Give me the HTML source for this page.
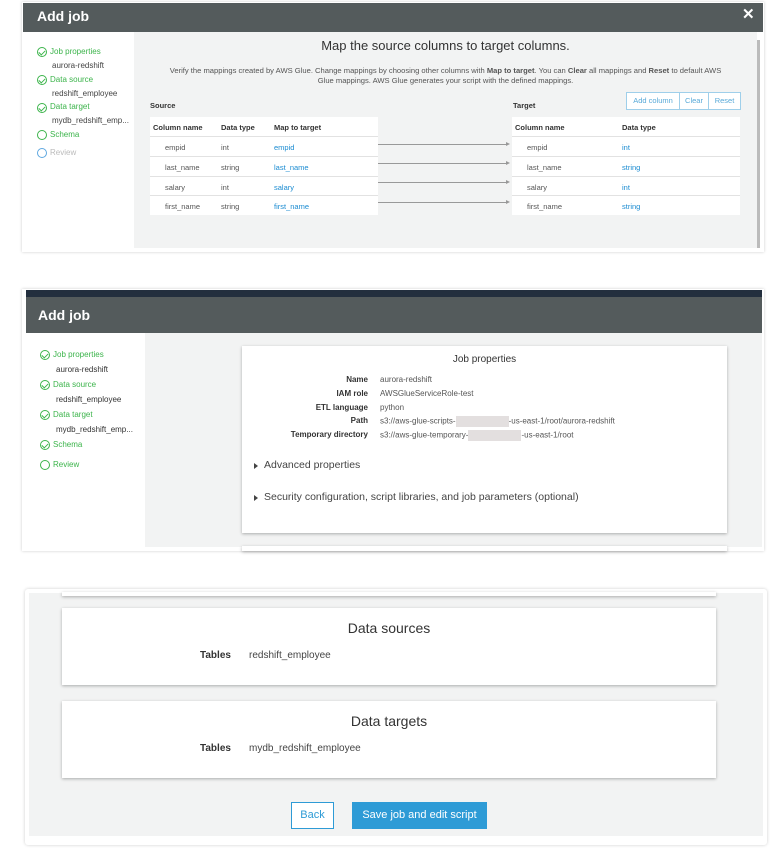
<!DOCTYPE html>
<html><head><style>
*{margin:0;padding:0;box-sizing:border-box}
body{width:775px;height:851px;background:#fff;font-family:"Liberation Sans",sans-serif;position:relative;overflow:hidden;color:#444}
.a{position:absolute;white-space:nowrap}
.hd{background:#545b5c;color:#fff;font-weight:bold}
.g{color:#3cb44b}
.b{color:#1a8bd1}
.ic{position:absolute;width:10px;height:10px;border:1.3px solid #3cb44b;border-radius:50%}
.ic:after{content:"";position:absolute;left:2px;top:1px;width:3px;height:5px;border:solid #3cb44b;border-width:0 1.3px 1.3px 0;transform:rotate(45deg)}
.ic.n:after{display:none}
.row{position:absolute;background:#fff;border-top:1px solid #e2e2e2;font-size:7.5px;color:#555}
.row span{position:absolute;top:6px}
.arr{position:absolute;height:1px;background:#999;width:130px;left:378px}
.arr:after{content:"";position:absolute;right:-2px;top:-2px;border-left:4px solid #999;border-top:2.5px solid transparent;border-bottom:2.5px solid transparent}
.btn{position:absolute;border:1px solid #9fcfea;background:#fff;color:#58a9d8;font-size:7.5px;text-align:center;line-height:16px;top:92px;height:18px}
.card{position:absolute;background:#fff;box-shadow:0 1px 3px rgba(0,0,0,.3)}
.lb{position:absolute;font-size:8px;font-weight:bold;color:#333;text-align:right;width:120px}
.vl{position:absolute;font-size:8px;color:#555}
.tri{position:absolute;border-left:4px solid #444;border-top:3px solid transparent;border-bottom:3px solid transparent}
</style></head><body>

<!-- Panel 1 -->
<div class="a" style="left:22px;top:2px;width:742px;height:250px;box-shadow:0 0 3px rgba(0,0,0,.2);background:#fff"></div>
<div class="a hd" style="left:23px;top:3px;width:740px;height:29px;font-size:14px;padding:5px 0 0 14px">Add job</div>
<div class="a" style="left:742px;top:5px;color:#fff;font-size:15px;font-weight:bold">✕</div>
<div class="a" style="left:134px;top:32px;width:623px;height:216px;background:#f2f3f3"></div>
<div class="a" style="left:757px;top:40px;width:3px;height:208px;background:#bbb"></div>

<div class="ic" style="left:37px;top:47px"></div><div class="a g" style="left:50px;top:47px;font-size:8px">Job properties</div>
<div class="a" style="left:52px;top:61px;font-size:8px">aurora-redshift</div>
<div class="ic" style="left:37px;top:75px"></div><div class="a g" style="left:50px;top:75px;font-size:8px">Data source</div>
<div class="a" style="left:52px;top:89px;font-size:8px">redshift_employee</div>
<div class="ic" style="left:37px;top:103px"></div><div class="a g" style="left:50px;top:102px;font-size:8px">Data target</div>
<div class="a" style="left:52px;top:116px;font-size:8px">mydb_redshift_emp...</div>
<div class="ic n" style="left:37px;top:130px"></div><div class="a g" style="left:50px;top:130px;font-size:8px">Schema</div>
<div class="ic n" style="left:37px;top:148px;border-color:#5fa8e0"></div><div class="a" style="left:50px;top:148px;font-size:8px;color:#bbb">Review</div>

<div class="a" style="left:134px;top:38px;width:623px;text-align:center;font-size:13px;color:#333">Map the source columns to target columns.</div>
<div class="a" style="left:134px;top:66px;width:623px;text-align:center;font-size:7.6px;color:#555;line-height:10px;white-space:normal;padding:0 34px">Verify the mappings created by AWS Glue. Change mappings by choosing other columns with <b>Map to target</b>. You can <b>Clear</b> all mappings and <b>Reset</b> to default AWS Glue mappings. AWS Glue generates your script with the defined mappings.</div>

<div class="a" style="left:150px;top:101px;font-size:7.5px;font-weight:bold;color:#333">Source</div>
<div class="a" style="left:150px;top:117px;width:228px;height:19px;background:#fff;font-size:7.5px;font-weight:bold;color:#333"><span class="a" style="left:3px;top:6px">Column name</span><span class="a" style="left:71px;top:6px">Data type</span><span class="a" style="left:124px;top:6px">Map to target</span></div>
<div class="row" style="left:150px;top:136px;width:228px;height:20px"><span style="left:15px">empid</span><span style="left:71px">int</span><span class="b" style="left:124px">empid</span></div>
<div class="row" style="left:150px;top:156px;width:228px;height:20px"><span style="left:15px">last_name</span><span style="left:71px">string</span><span class="b" style="left:124px">last_name</span></div>
<div class="row" style="left:150px;top:176px;width:228px;height:19px"><span style="left:15px">salary</span><span style="left:71px">int</span><span class="b" style="left:124px">salary</span></div>
<div class="row" style="left:150px;top:195px;width:228px;height:20px"><span style="left:15px">first_name</span><span style="left:71px">string</span><span class="b" style="left:124px">first_name</span></div>

<div class="arr" style="top:144px"></div><div class="arr" style="top:163px"></div><div class="arr" style="top:182px"></div><div class="arr" style="top:202px"></div>

<div class="a" style="left:513px;top:101px;font-size:7.5px;font-weight:bold;color:#333">Target</div>
<div class="btn" style="left:626px;width:54px">Add column</div>
<div class="btn" style="left:679px;width:30px">Clear</div>
<div class="btn" style="left:708px;width:33px">Reset</div>
<div class="a" style="left:512px;top:117px;width:228px;height:19px;background:#fff;font-size:7.5px;font-weight:bold;color:#333"><span class="a" style="left:3px;top:6px">Column name</span><span class="a" style="left:110px;top:6px">Data type</span></div>
<div class="row" style="left:512px;top:136px;width:228px;height:20px"><span style="left:15px">empid</span><span class="b" style="left:110px">int</span></div>
<div class="row" style="left:512px;top:156px;width:228px;height:20px"><span style="left:15px">last_name</span><span class="b" style="left:110px">string</span></div>
<div class="row" style="left:512px;top:176px;width:228px;height:19px"><span style="left:15px">salary</span><span class="b" style="left:110px">int</span></div>
<div class="row" style="left:512px;top:195px;width:228px;height:20px"><span style="left:15px">first_name</span><span class="b" style="left:110px">string</span></div>

<!-- Panel 2 -->
<div class="a" style="left:22px;top:289px;width:742px;height:262px;box-shadow:0 0 3px rgba(0,0,0,.2);background:#fff"></div>
<div class="a" style="left:26px;top:290px;width:736px;height:7px;background:#232f3e"></div>
<div class="a hd" style="left:26px;top:297px;width:736px;height:36px;font-size:14px;padding:10px 0 0 12px">Add job</div>
<div class="a" style="left:145px;top:333px;width:617px;height:214px;background:#f2f3f3"></div>

<div class="ic" style="left:40px;top:350px"></div><div class="a g" style="left:53px;top:350px;font-size:8px">Job properties</div>
<div class="a" style="left:56px;top:365px;font-size:8px;color:#333">aurora-redshift</div>
<div class="ic" style="left:40px;top:380px"></div><div class="a g" style="left:53px;top:380px;font-size:8px">Data source</div>
<div class="a" style="left:56px;top:395px;font-size:8px;color:#333">redshift_employee</div>
<div class="ic" style="left:40px;top:410px"></div><div class="a g" style="left:53px;top:410px;font-size:8px">Data target</div>
<div class="a" style="left:56px;top:425px;font-size:8px;color:#333">mydb_redshift_emp...</div>
<div class="ic" style="left:40px;top:440px"></div><div class="a g" style="left:53px;top:440px;font-size:8px">Schema</div>
<div class="ic n" style="left:40px;top:460px"></div><div class="a g" style="left:53px;top:460px;font-size:8px">Review</div>

<div class="card" style="left:242px;top:346px;width:485px;height:187px"></div>
<div class="card" style="left:242px;top:546px;width:485px;height:5px"></div>
<div class="a" style="left:242px;top:354px;width:485px;text-align:center;font-size:10px;color:#333">Job properties</div>
<div class="lb" style="left:248px;top:375px">Name</div><div class="vl" style="left:380px;top:375px">aurora-redshift</div>
<div class="lb" style="left:248px;top:389px">IAM role</div><div class="vl" style="left:380px;top:389px">AWSGlueServiceRole-test</div>
<div class="lb" style="left:248px;top:403px">ETL language</div><div class="vl" style="left:380px;top:403px">python</div>
<div class="lb" style="left:248px;top:416px">Path</div><div class="vl" style="left:380px;top:416px">s3://aws-glue-scripts-<span style="display:inline-block;width:53px;height:11px;background:#e3dfdf;vertical-align:middle"></span>-us-east-1/root/aurora-redshift</div>
<div class="lb" style="left:248px;top:430px">Temporary directory</div><div class="vl" style="left:380px;top:430px">s3://aws-glue-temporary-<span style="display:inline-block;width:53px;height:11px;background:#e3dfdf;vertical-align:middle"></span>-us-east-1/root</div>
<div class="tri" style="left:254px;top:463px"></div><div class="a" style="left:264px;top:459px;font-size:10.5px;color:#444">Advanced properties</div>
<div class="tri" style="left:254px;top:495px"></div><div class="a" style="left:264px;top:491px;font-size:10.5px;color:#444">Security configuration, script libraries, and job parameters (optional)</div>

<!-- Panel 3 -->
<div class="a" style="left:25px;top:589px;width:742px;height:256px;box-shadow:0 0 3px rgba(0,0,0,.2);background:#fff;border-radius:3px"></div>
<div class="a" style="left:29px;top:593px;width:734px;height:243px;background:#f2f3f3"></div>
<div class="card" style="left:62px;top:592px;width:654px;height:4px"></div>
<div class="card" style="left:62px;top:608px;width:654px;height:77px"></div>
<div class="a" style="left:62px;top:620px;width:654px;text-align:center;font-size:14px;color:#333">Data sources</div>
<div class="a" style="left:200px;top:650px;font-size:10px;font-weight:bold;color:#333">Tables</div>
<div class="a" style="left:249px;top:650px;font-size:10px;color:#444">redshift_employee</div>
<div class="card" style="left:62px;top:701px;width:654px;height:77px"></div>
<div class="a" style="left:62px;top:713px;width:654px;text-align:center;font-size:14px;color:#333">Data targets</div>
<div class="a" style="left:200px;top:743px;font-size:10px;font-weight:bold;color:#333">Tables</div>
<div class="a" style="left:249px;top:743px;font-size:10px;color:#444">mydb_redshift_employee</div>
<div class="a" style="left:291px;top:802px;width:43px;height:27px;border:1px solid #2e9bd6;background:#fff;color:#2e9bd6;font-size:11px;text-align:center;line-height:25px">Back</div>
<div class="a" style="left:352px;top:802px;width:135px;height:27px;background:#2e9bd6;color:#fff;font-size:11px;text-align:center;line-height:27px">Save job and edit script</div>
</body></html>
